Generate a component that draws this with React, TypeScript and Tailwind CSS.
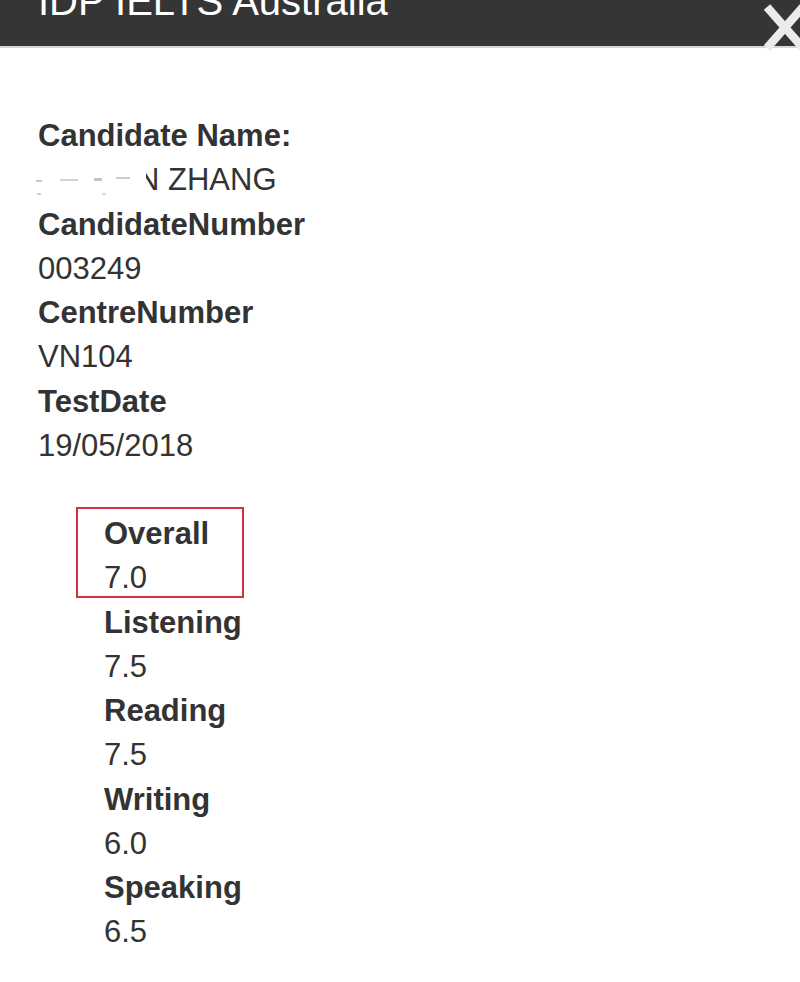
import React from "react";

const info: [string, string][] = [
  ["CandidateNumber", "003249"],
  ["CentreNumber", "VN104"],
  ["TestDate", "19/05/2018"],
];

const scores: [string, string][] = [
  ["Overall", "7.0"],
  ["Listening", "7.5"],
  ["Reading", "7.5"],
  ["Writing", "6.0"],
  ["Speaking", "6.5"],
];

function Field({ label, value }: { label: string; value: string }) {
  return (
    <div className="flex flex-col">
      <div className="font-bold">{label}</div>
      <div>{value}</div>
    </div>
  );
}

export default function App() {
  return (
    <div
      className="relative flex flex-col w-[800px] h-[982px] overflow-hidden bg-white text-[#333333]"
      style={{ fontFamily: '"Liberation Sans", Arial, sans-serif' }}
    >
      <header className="relative flex items-end h-[48px] shrink-0 bg-[#353535] border-b-2 border-[#d6d6d6] px-[38px]">
        <div className="text-[40px] leading-[48px] mb-[21px] text-white whitespace-nowrap">
          IDP IELTS Australia
        </div>
        <svg
          className="absolute right-[-10px] top-[2px] z-10"
          width="50"
          height="50"
          viewBox="0 0 50 50"
        >
          <path d="M7 5 L43 46 M43 5 L7 46" stroke="#ebebeb" strokeWidth="8.5" strokeLinecap="butt" />
        </svg>
      </header>

      <main className="flex flex-col pl-[38px] pt-[66px] text-[31px] leading-[44.25px]">
        <div className="font-bold">Candidate Name:</div>
        <div className="relative">
          <span className="inline-block pl-[99px] whitespace-nowrap">N ZHANG</span>
          <div className="absolute left-[-4px] top-[4px] w-[112px] h-[38px] bg-white">
            <div className="absolute left-[2px] top-[18px] w-[6px] h-[2px] bg-[#c8c8c8]" />
            <div className="absolute left-[3px] top-[31px] w-[4px] h-[2px] bg-[#d0d0d0]" />
            <div className="absolute left-[26px] top-[17px] w-[18px] h-[2px] bg-[#d4d4d4]" />
            <div className="absolute left-[60px] top-[16px] w-[8px] h-[3px] bg-[#c4c4c4]" />
            <div className="absolute left-[82px] top-[15px] w-[14px] h-[2px] bg-[#cccccc]" />
            <div className="absolute left-[68px] top-[31px] w-[4px] h-[2px] bg-[#d8d8d8]" />
          </div>
        </div>
        {info.map(([k, v]) => (
          <Field key={k} label={k} value={v} />
        ))}

        <div className="relative flex flex-col mt-[44px] pl-[66px]">
          <div className="absolute left-[38px] top-[-5px] w-[168px] h-[91px] border-2 border-[#d2313f]" />
          {scores.map(([k, v]) => (
            <Field key={k} label={k} value={v} />
          ))}
        </div>
      </main>
    </div>
  );
}
